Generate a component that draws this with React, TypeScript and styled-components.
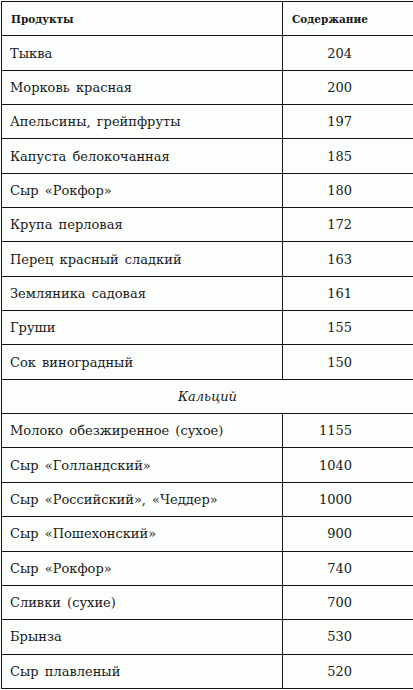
import React from "react";
import styled, { createGlobalStyle } from "styled-components";

const Global = createGlobalStyle`
  html, body { margin: 0; padding: 0; background: #fcfefb; }
  body { font-family: "DejaVu Serif", "Liberation Serif", serif; color: #1a1a1a; }
  *, *::before, *::after { box-sizing: border-box; }
`;

const Page = styled.div`
  padding: 1px 0 0 1px;
`;

const Table = styled.table`
  border-collapse: collapse;
  width: 412px;
  table-layout: fixed;
`;

const NameCol = styled.col`
  width: 281px;
`;

const ValueCol = styled.col`
  width: 131px;
`;

const Row = styled.tr`
  height: 34.35px;
`;

const HeadCell = styled.th`
  border: 1px solid #141414;
  font-size: 10.5px;
  font-weight: bold;
  text-align: left;
  padding: 0 0 0 9px;
`;

const NameCell = styled.td`
  border: 1px solid #141414;
  font-size: 13px;
  padding: 0 0 0 8px;
  word-spacing: 2px;
`;

const ValueCell = styled.td`
  border: 1px solid #141414;
  font-size: 13px;
  text-align: right;
  padding: 0 61px 0 0;
`;

const SectionCell = styled.td`
  border: 1px solid #141414;
  font-size: 13px;
  font-style: italic;
  text-align: center;
`;

const group1: [string, string][] = [
  ["Тыква", "204"],
  ["Морковь красная", "200"],
  ["Апельсины, грейпфруты", "197"],
  ["Капуста белокочанная", "185"],
  ["Сыр «Рокфор»", "180"],
  ["Крупа перловая", "172"],
  ["Перец красный сладкий", "163"],
  ["Земляника садовая", "161"],
  ["Груши", "155"],
  ["Сок виноградный", "150"],
];

const group2: [string, string][] = [
  ["Молоко обезжиренное (сухое)", "1155"],
  ["Сыр «Голландский»", "1040"],
  ["Сыр «Российский», «Чеддер»", "1000"],
  ["Сыр «Пошехонский»", "900"],
  ["Сыр «Рокфор»", "740"],
  ["Сливки (сухие)", "700"],
  ["Брынза", "530"],
  ["Сыр плавленый", "520"],
];

export default function App() {
  return (
    <Page>
      <Global />
      <Table>
        <colgroup>
          <NameCol />
          <ValueCol />
        </colgroup>
        <thead>
          <Row>
            <HeadCell>Продукты</HeadCell>
            <HeadCell>Содержание</HeadCell>
          </Row>
        </thead>
        <tbody>
          {group1.map(([n, v], i) => (
            <Row key={"a" + i}>
              <NameCell>{n}</NameCell>
              <ValueCell>{v}</ValueCell>
            </Row>
          ))}
          <Row>
            <SectionCell colSpan={2}>Кальций</SectionCell>
          </Row>
          {group2.map(([n, v], i) => (
            <Row key={"b" + i}>
              <NameCell>{n}</NameCell>
              <ValueCell>{v}</ValueCell>
            </Row>
          ))}
        </tbody>
      </Table>
    </Page>
  );
}
